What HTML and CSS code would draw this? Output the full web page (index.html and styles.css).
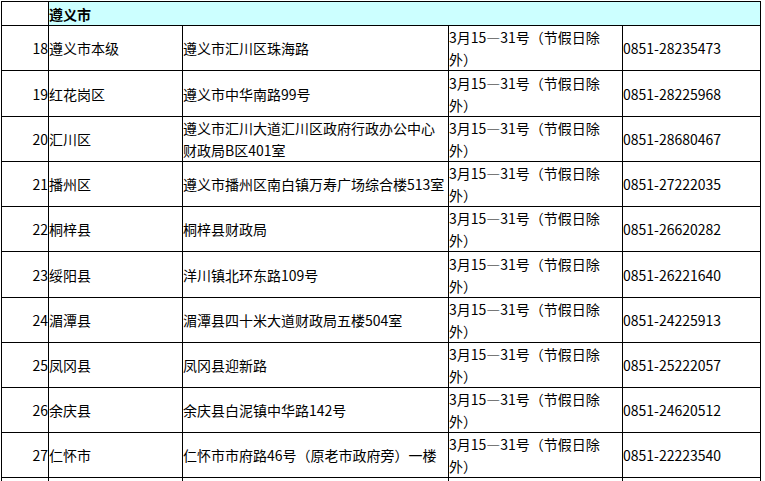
FILE: index.html
```html
<!DOCTYPE html>
<html lang="zh-CN">
<head>
<meta charset="utf-8">
<title>遵义市</title>
<link rel="stylesheet" href="styles.css">
</head>
<body>
<div class="page">
<table class="grid">
<colgroup>
<col class="c-no"><col class="c-name"><col class="c-addr"><col class="c-date"><col class="c-tel">
</colgroup>
<tbody>
<tr class="head"><td></td><td colspan="4" class="city">遵义市</td></tr>
<tr><td class="no">18</td><td>遵义市本级</td><td>遵义市汇川区珠海路</td><td class="date">3月15—31号（节假日除外）</td><td>0851-28235473</td></tr>
<tr class="tall"><td class="no">19</td><td>红花岗区</td><td>遵义市中华南路99号</td><td class="date">3月15—31号（节假日除外）</td><td>0851-28225968</td></tr>
<tr><td class="no">20</td><td>汇川区</td><td>遵义市汇川大道汇川区政府行政办公中心财政局B区401室</td><td class="date">3月15—31号（节假日除外）</td><td>0851-28680467</td></tr>
<tr><td class="no">21</td><td>播州区</td><td>遵义市播州区南白镇万寿广场综合楼513室</td><td class="date">3月15—31号（节假日除外）</td><td>0851-27222035</td></tr>
<tr><td class="no">22</td><td>桐梓县</td><td>桐梓县财政局</td><td class="date">3月15—31号（节假日除外）</td><td>0851-26620282</td></tr>
<tr class="tall"><td class="no">23</td><td>绥阳县</td><td>洋川镇北环东路109号</td><td class="date">3月15—31号（节假日除外）</td><td>0851-26221640</td></tr>
<tr><td class="no">24</td><td>湄潭县</td><td>湄潭县四十米大道财政局五楼504室</td><td class="date">3月15—31号（节假日除外）</td><td>0851-24225913</td></tr>
<tr><td class="no">25</td><td>凤冈县</td><td>凤冈县迎新路</td><td class="date">3月15—31号（节假日除外）</td><td>0851-25222057</td></tr>
<tr><td class="no">26</td><td>余庆县</td><td>余庆县白泥镇中华路142号</td><td class="date">3月15—31号（节假日除外）</td><td>0851-24620512</td></tr>
<tr><td class="no">27</td><td>仁怀市</td><td>仁怀市市府路46号（原老市政府旁）一楼</td><td class="date">3月15—31号（节假日除外）</td><td>0851-22223540</td></tr>
<tr><td class="no"></td><td></td><td></td><td></td><td></td></tr>
</tbody>
</table>
</div>
</body>
</html>
```
FILE: styles.css
```css
html, body {
  margin: 0;
  padding: 0;
  overflow: hidden;
  background: #ffffff;
}
.page {
  padding: 1px 0 0 1px;
}
.grid {
  border-collapse: separate;
  border-spacing: 0;
  table-layout: fixed;
  width: 760px;
  border-top: 1px solid #000;
  border-left: 1px solid #000;
  font-family: "Noto Sans CJK SC", "Noto Sans", sans-serif;
  font-size: 14px;
  line-height: 22px;
  color: #000;
  text-spacing-trim: space-all;
}
.c-no { width: 47px; }
.c-name { width: 134px; }
.c-addr { width: 266px; }
.c-date { width: 174px; }
.c-tel { width: 138px; }
.grid td {
  box-sizing: border-box;
  height: 45px;
  padding: 0;
  border-right: 1px solid #000;
  border-bottom: 1px solid #000;
  vertical-align: middle;
  text-align: left;
}
.grid td.date {
  padding-right: 12px;
}
.grid tr.tall td {
  height: 46px;
}
.grid tr.head td {
  height: 24px;
}
.grid td.city {
  background: #ccffff;
  font-weight: bold;
}
.grid td.no {
  text-align: right;
}
```
